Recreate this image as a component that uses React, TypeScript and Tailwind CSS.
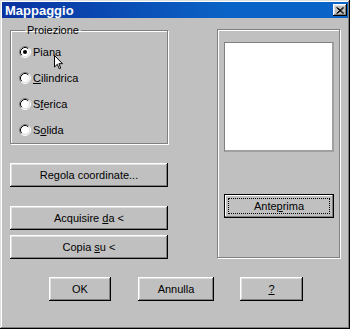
import React from 'react';

const bevel =
  'bg-[#c0c0c0] shadow-[inset_-1px_-1px_0_#000,inset_1px_1px_0_#fff,inset_-2px_-2px_0_#808080,inset_2px_2px_0_#dfdfdf]';
const etched = 'border border-[#808080] shadow-[inset_1px_1px_0_#fff,1px_1px_0_#fff]';

const Radio: React.FC<{ checked?: boolean }> = ({ checked }) => (
  <svg width="12" height="12" viewBox="0 0 12 12" className="shrink-0">
    <circle cx="6" cy="6" r="5" fill="#fff" />
    <path d="M2.11 9.89 A5.5 5.5 0 0 1 9.89 2.11" fill="none" stroke="#808080" />
    <path d="M9.89 2.11 A5.5 5.5 0 0 1 2.11 9.89" fill="none" stroke="#fff" />
    <path d="M2.82 9.18 A4.5 4.5 0 0 1 9.18 2.82" fill="none" stroke="#000" />
    <path d="M9.18 2.82 A4.5 4.5 0 0 1 2.82 9.18" fill="none" stroke="#dfdfdf" />
    {checked && <circle cx="6" cy="6" r="2" fill="#000" />}
  </svg>
);

const options: { key: string; label: React.ReactNode; checked?: boolean }[] = [
  { key: 'piana', label: 'Piana', checked: true },
  { key: 'cilindrica', label: <><u>C</u>ilindrica</> },
  { key: 'sferica', label: <>S<u>f</u>erica</> },
  { key: 'solida', label: <>S<u>o</u>lida</> },
];

const App: React.FC = () => {
  return (
    <div className="relative w-[350px] h-[329px] bg-[#c0c0c0] p-[2px] flex flex-col text-[11px] text-black font-['Liberation_Sans',Arial,sans-serif] shadow-[inset_-1px_-1px_0_#000,inset_1px_1px_0_#dfdfdf,inset_-2px_-2px_0_#808080,inset_2px_2px_0_#fff]">
      {/* title bar */}
      <div className="h-[16px] flex items-center justify-between pl-[3px] pr-[1px] bg-[linear-gradient(90deg,#0a33a0_0%,#0a63c6_65%)]">
        <span className="text-white font-bold text-[13px] leading-[16px] pt-[1px]">Mappaggio</span>
        <button className={`w-[14px] h-[12px] flex items-center justify-center ${bevel}`}>
          <svg width="8" height="7" viewBox="0 0 8 7">
            <path d="M0.5 0.5 L7 6.5 M1.5 0.5 L8 6.5 M7 0.5 L0.5 6.5 M8 0.5 L1.5 6.5" stroke="#000" strokeWidth="1" />
          </svg>
        </button>
      </div>

      <div className="flex-1 px-[8px] flex flex-col">
        <div className="flex">
          {/* left column */}
          <div className="w-[158px] flex flex-col">
            <fieldset className={`mt-[6px] pl-[8px] pt-[2px] ${etched}`}>
              <legend className="ml-[6px] px-[2px] leading-[13px]">Proiezione</legend>
              {options.map((o) => (
                <div key={o.key} className="h-[26px] flex items-center">
                  <Radio checked={o.checked} />
                  <span className="ml-[2px] leading-[13px]">{o.label}</span>
                </div>
              ))}
            </fieldset>
            <button className={`mt-[19px] h-[24px] ${bevel}`}>Regola coordinate...</button>
            <button className={`mt-[19px] h-[24px] ${bevel}`}>
              Acquisire <u>d</u>a &lt;
            </button>
            <button className={`mt-[5px] h-[24px] ${bevel}`}>
              Copia <u>s</u>u &lt;
            </button>
          </div>

          {/* right column */}
          <div className={`ml-[49px] mt-[11px] w-[123px] h-[229px] pl-[6px] pt-[12px] flex flex-col ${etched}`}>
            <div className="w-[110px] h-[110px] bg-white border border-[#808080] border-r-2 border-b-2 border-r-[#a0a0a0] border-b-[#a0a0a0]" />
            <button className="mt-[42px] w-[110px] h-[24px] border border-black bg-[#c0c0c0] p-[3px] flex shadow-[inset_-1px_-1px_0_#808080,inset_1px_1px_0_#fff]">
              <span className="flex-1 border border-dotted border-black flex items-center justify-center">
                Ante<u>p</u>rima
              </span>
            </button>
          </div>
        </div>

        {/* bottom buttons */}
        <div className="flex mt-[18px] pl-[39px]">
          <button className={`w-[62px] h-[24px] ${bevel}`}>OK</button>
          <button className={`ml-[27px] w-[76px] h-[24px] ${bevel}`}>Annulla</button>
          <button className={`ml-[26px] w-[63px] h-[24px] ${bevel}`}>
            <u>?</u>
          </button>
        </div>
      </div>

      {/* mouse pointer over "Piana" */}
      <svg className="absolute left-[54px] top-[55px]" width="10" height="15" viewBox="0 0 10 15">
        <path d="M0.5 0.5 L0.5 12 L3.3 9.3 L5.3 13.8 L6.8 13.1 L4.9 8.7 L8.5 8.7 Z" fill="#fff" stroke="#000" strokeWidth="1" strokeLinejoin="miter" />
      </svg>
    </div>
  );
};

export default App;
